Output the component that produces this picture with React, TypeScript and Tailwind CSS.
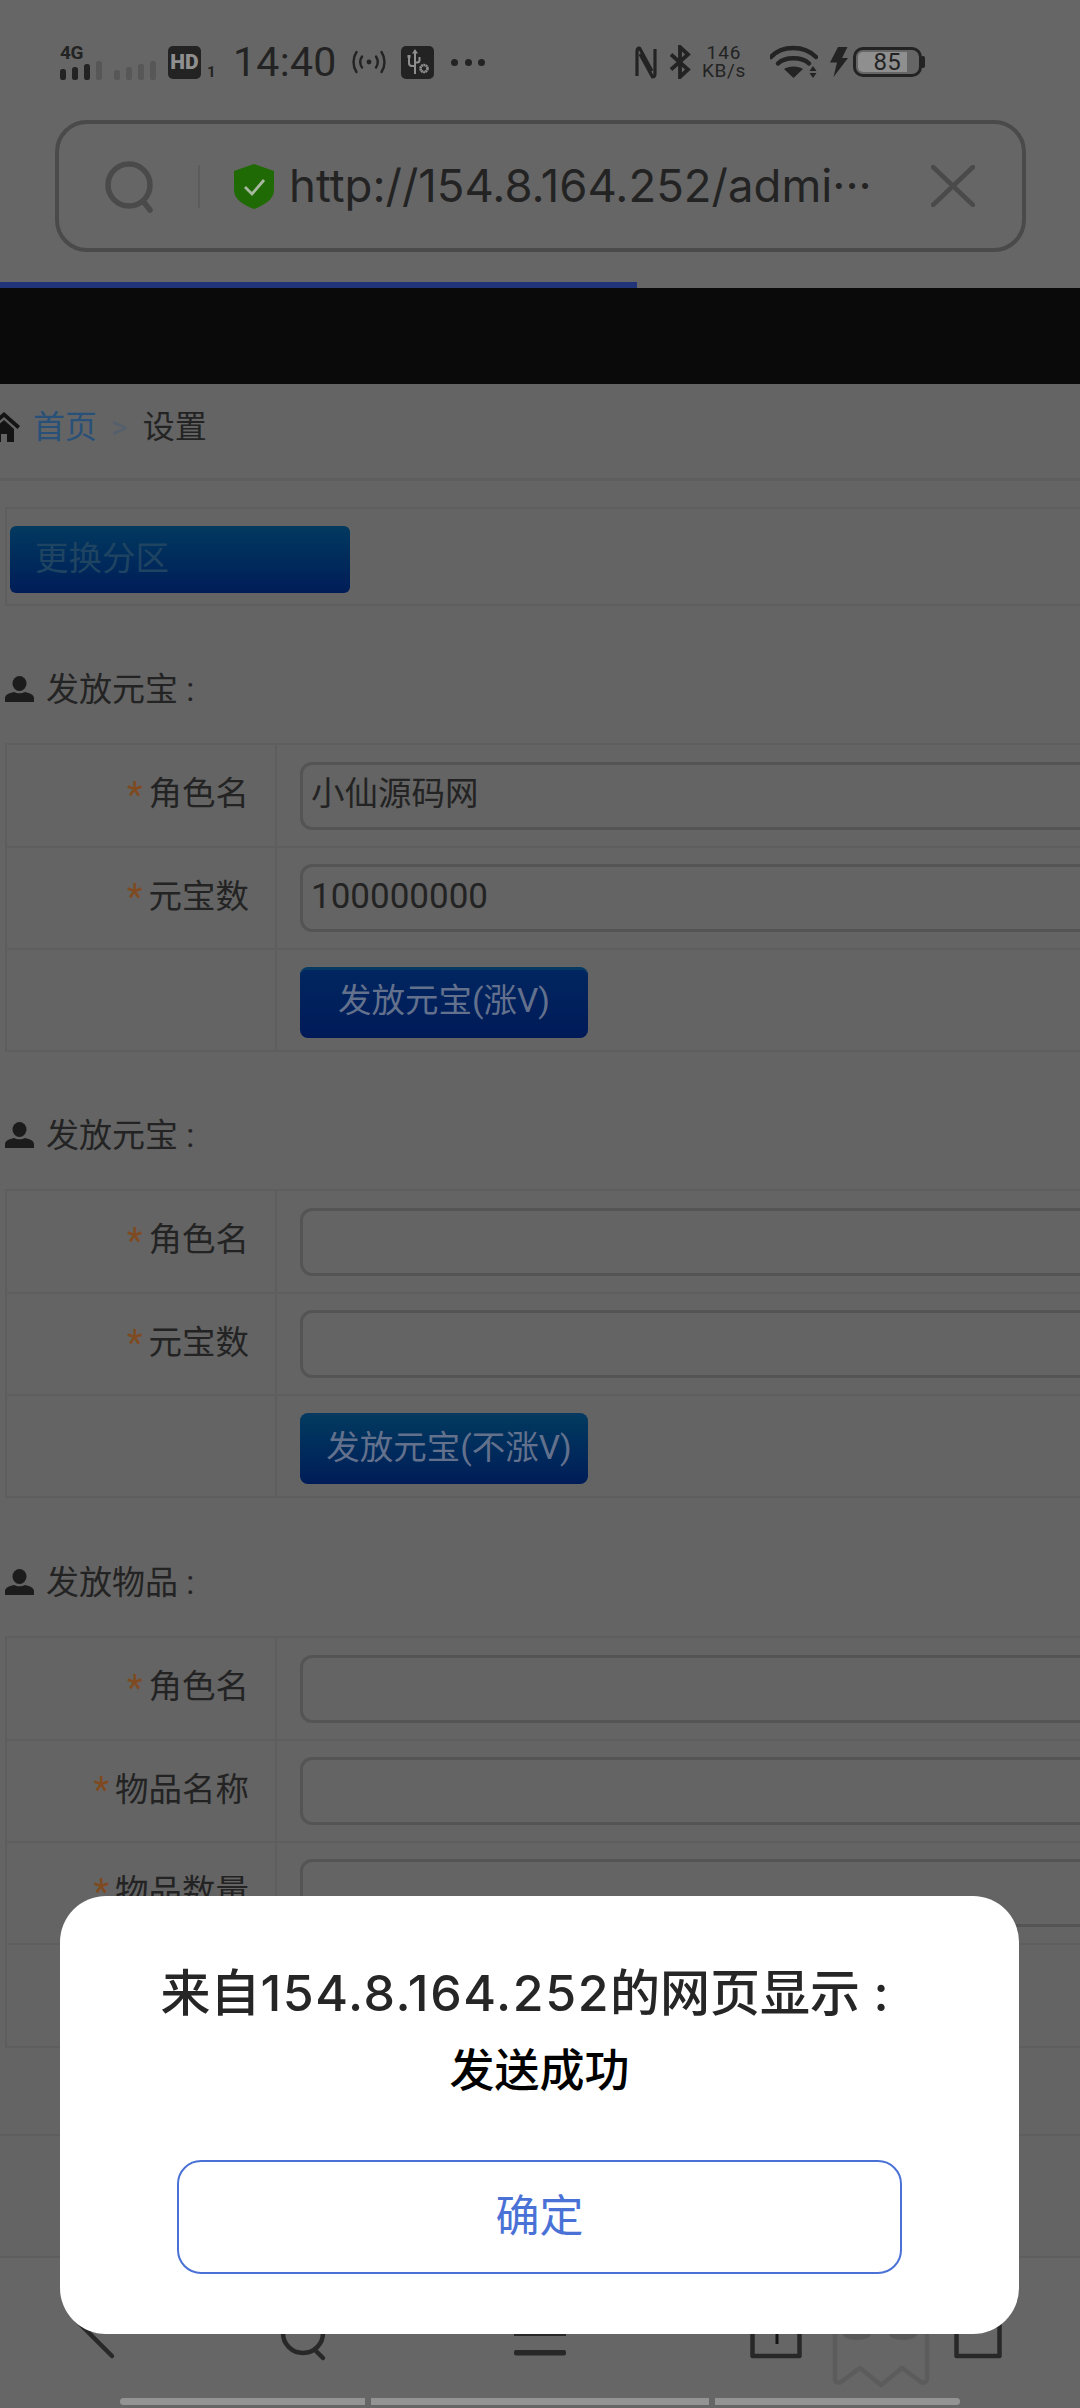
import React from "react";

const FONT = { fontFamily: '"Roboto","Noto Sans CJK SC",sans-serif' };
const INTER = { fontFamily: '"Inter","Noto Sans CJK SC",sans-serif' };

function SignalBars() {
  const dark = [[60, 11], [72, 13], [84, 16]];
  const light = [[96, 19], [114, 10], [126, 13], [138, 16], [150, 19]];
  return (
    <svg width="100" height="20" viewBox="60 0 100 20" className="block">
      {dark.map(([x, h]) => (
        <rect key={x} x={x} y={20 - h} width="6" height={h} rx="2.5" fill="#232323" />
      ))}
      {light.map(([x, h]) => (
        <rect key={x} x={x} y={20 - h} width="6" height={h} rx="2.5" fill="#575757" />
      ))}
    </svg>
  );
}

function StatusBar() {
  return (
    <div className="flex h-[40px] items-center pt-[4px] text-[#232323]">
      <div className="ml-[60px] flex w-[100px] flex-col">
        <span className="h-[15px] text-[19px] font-bold leading-[15px] tracking-[-0.5px]">4G</span>
        <SignalBars />
      </div>
      <span className="ml-[8px] flex h-[33px] w-[33px] items-center justify-center rounded-[5px] bg-[#232323] text-[21px] font-black leading-none text-[#8f8f8f]">HD</span>
      <span className="ml-[6px] mt-[20px] w-[6px] text-[15px] font-bold leading-none">1</span>
      <span className="ml-[20px] w-[106px] whitespace-nowrap text-[41px] leading-none tracking-[0.3px]">14:40</span>
      <svg width="34" height="24" viewBox="0 0 34 24" className="ml-[13px]" fill="none" stroke="#232323" strokeWidth="2.4" strokeLinecap="round">
        <circle cx="17" cy="12" r="2.4" fill="#232323" stroke="none" />
        <path d="M10 6.5c-2.2 3.400-2.200 7.600 0 11" />
        <path d="M24 6.500c2.200 3.400 2.200 7.600 0 11" />
        <path d="M4.500 2c-4 6-4 14 0 20" />
        <path d="M29.500 2c4 6 4 14 0 20" />
      </svg>
      <span className="ml-[15px] flex h-[33px] w-[33px] items-center justify-center rounded-[5px] bg-[#232323]">
        <svg width="27" height="29" viewBox="0 0 27 29" fill="none" stroke="#8f8f8f" strokeWidth="2">
          <path d="M11 26V4" />
          <path d="M11 1l3 4.500H8z" fill="#8f8f8f" stroke="none" />
          <path d="M5 10v5c0 2 1 3 3 3h3" />
          <path d="M15.500 9v3c0 1.500-1 2.500-2.500 2.500h-2" />
          <rect x="3.500" y="7" width="3" height="3" fill="#8f8f8f" stroke="none" />
          <circle cx="20" cy="20.500" r="3.500" strokeWidth="2.600" strokeDasharray="1.800 0.400" />
        </svg>
      </span>
      <span className="ml-[17px] flex w-[34px] justify-between">
        <i className="block h-[7px] w-[7px] rounded-full bg-[#232323]" />
        <i className="block h-[7px] w-[7px] rounded-full bg-[#232323]" />
        <i className="block h-[7px] w-[7px] rounded-full bg-[#232323]" />
      </span>

      <svg width="22" height="33" viewBox="0 0 22 33" className="ml-[150px]" fill="none" stroke="#232323" strokeWidth="3.200" strokeLinejoin="round">
        <path d="M2 30V5.500C2 3 3 2 4.500 2L17 25" />
        <path d="M20 3v24.500c0 2-1 3.500-2.500 3.500L5 8" />
      </svg>
      <svg width="22" height="34" viewBox="0 0 22 34" className="ml-[12px]" fill="none" stroke="#232323" strokeWidth="3.800" strokeLinejoin="miter">
        <path d="M2 9.500l17 15L11 32V2l8 7.500L2 24.500" />
      </svg>
      <div className="ml-[11px] flex w-[44px] flex-col items-center text-[19px] leading-[18px]">
        <span className="tracking-[1px]">146</span>
        <span className="whitespace-nowrap tracking-[0.6px]">KB/s</span>
      </div>
      <svg width="48" height="34" viewBox="0 0 48 34" className="ml-[24px]" fill="#232323">
        <path d="M1 12C12 0 34 0 46 12" fill="none" stroke="#232323" strokeWidth="4.500" strokeLinecap="round" />
        <path d="M8 18.500C15 11.500 32 11.500 39 18.500" fill="none" stroke="#232323" strokeWidth="4.500" strokeLinecap="round" />
        <path d="M14 24c4-3.500 15-3.500 19 0l-9.500 9z" />
        <path d="M43 21l3.500 5h-7zM39.500 28h7L43 33z" />
      </svg>
      <svg width="18" height="30" viewBox="0 0 18 30" className="ml-[12px]" fill="#232323">
        <path d="M8 0h9.500l-5.500 11h6L3.500 30 7 15.500H0z" />
      </svg>
      <div className="ml-[5px] flex items-center">
        <div className="flex h-[30px] w-[69px] items-center rounded-[10px] border-[3px] border-[#232323] p-[2px]">
          <div className="flex h-full w-[49px] items-center justify-end rounded-l-[5px] bg-[#8f8f8f] pr-[6px] text-[24px] leading-none tracking-[0.3px]">85</div>
        </div>
        <div className="h-[12px] w-[3px] rounded-r-[2px] bg-[#232323]" />
      </div>
    </div>
  );
}

function AddressBar() {
  return (
    <div className="mx-[55px] mt-[40px] flex h-[132px] w-[971px] items-center rounded-[32px] border-[4px] border-[#4a4a4a]">
      <svg width="52" height="52" viewBox="0 0 52 52" className="ml-[46px] mt-[2px]" fill="none" stroke="#4a4a4a" strokeWidth="5.500" strokeLinecap="round">
        <circle cx="24" cy="24" r="21" />
        <path d="M38 40l7 9" />
      </svg>
      <div className="ml-[41px] h-[43px] w-[2px] bg-[#5c5c5c]" />
      <svg width="40" height="45" viewBox="0 0 40 45" className="ml-[34px]">
        <path d="M20 0l20 7v19c0 9-9 15-20 19C9 41 0 35 0 26V7z" fill="#206a05" />
        <path d="M11 23l7 7 12-14" fill="none" stroke="#a8b8a0" strokeWidth="2.800" />
      </svg>
      <span className="ml-[15px] w-[583px] whitespace-nowrap text-[45.500px] leading-none text-[#232323]" style={INTER}>http://154.8.164.252/admi···</span>
      <svg width="44" height="42" viewBox="0 0 44 42" className="ml-[59px]" fill="none" stroke="#4a4a4a" strokeWidth="4.500" strokeLinecap="round">
        <path d="M2 2l40 38M42 2L2 40" />
      </svg>
    </div>
  );
}

function HomeIcon() {
  return (
    <svg width="32" height="30" viewBox="0 0 32 30" className="ml-[-12px]" fill="#141414">
      <path d="M16 0L32 14l-2.500 3L16 5 2.500 17 0 14z" />
      <path d="M6 17L16 8l10 9v13h-7v-8h-6v8H6z" />
    </svg>
  );
}

function UserIcon() {
  return (
    <svg width="29" height="26" viewBox="0 0 29 26" fill="#1c1c1c">
      <ellipse cx="14.500" cy="7.500" rx="7" ry="7.500" />
      <path d="M0 26v-4c0-3 4-5 9-6 3 1.800 8 1.800 11 0 5 1 9 3 9 6v4z" />
    </svg>
  );
}

function Heading({ title, tall }: { title: string; tall?: boolean }) {
  return (
    <div className={`ml-[5px] flex items-end gap-[12px] pb-[31px] text-[33px] leading-[44px] text-[#232323] ${tall ? "h-[138px]" : "h-[137px]"}`}>
      <span className="mb-[10px]">
        <UserIcon />
      </span>
      <span>{title} :</span>
    </div>
  );
}

function Row({ label, value, first }: { label?: string; value?: string; first?: boolean }) {
  return (
    <div className={`flex ${first ? "h-[101px]" : "h-[102px] border-t-2 border-[#5e5e5e]"}`}>
      <div className="flex w-[270px] items-center justify-end border-r-2 border-[#5e5e5e] pb-[2px] pr-[26px] text-[33.500px] text-[#232323]">
        {label && (
          <>
            <span className="mr-[6px] text-[36px] leading-none text-[#7f4a1f]">*</span>
            {label}
          </>
        )}
      </div>
      <div className="flex flex-1 items-center pl-[23px]">
        <div className={`flex h-[68px] w-[1000px] items-center rounded-[12px] border-[3px] border-[#545454] pb-[2px] pl-[8px] text-[#232323] ${value && value.startsWith("1") ? "text-[35px]" : "text-[33.500px]"}`}>
          {value}
        </div>
      </div>
    </div>
  );
}

function ButtonRow({ text, light }: { text: string; light?: boolean }) {
  return (
    <div className="flex h-[102px] border-t-2 border-[#5e5e5e]">
      <div className="w-[270px] border-r-2 border-[#5e5e5e]" />
      <div className="flex flex-1 items-center pl-[23px]">
        <div
          className={`mt-[4px] flex h-[71px] w-[288px] items-center justify-center whitespace-nowrap rounded-[8px] border-t-[3px] border-[#063a62] text-[33.500px] text-[#63718c] ${light ? "bg-gradient-to-b from-[#03395f] to-[#001c58] pb-[3px] pl-[10px]" : "bg-gradient-to-b from-[#012660] to-[#001a58] pb-[4px]"}`}
        >
          {text}
        </div>
      </div>
    </div>
  );
}

function Table({ children }: { children: React.ReactNode }) {
  return <div className="ml-[5px] w-[1300px] border-2 border-[#5e5e5e]">{children}</div>;
}

function BottomNav() {
  const stroke = "#282828";
  return (
    <div className="h-[152px] border-t-2 border-[#5e5e5e] pt-[42px]">
      <div className="flex h-[62px] items-end">
        <svg width="50" height="62" viewBox="0 0 50 62" className="ml-[72px] shrink-0" fill="none" stroke={stroke} strokeWidth="4.500" strokeLinecap="round">
          <path d="M40 56L4 20" />
        </svg>
        <svg width="56" height="62" viewBox="0 0 56 62" className="ml-[158px] shrink-0" fill="none" stroke={stroke} strokeWidth="4.500" strokeLinecap="round">
          <circle cx="23" cy="33" r="20" />
          <path d="M35 50l8 8" />
        </svg>
        <svg width="52" height="62" viewBox="0 0 52 62" className="ml-[178px] shrink-0" fill={stroke}>
          <rect x="0" y="30" width="52" height="6" />
          <rect x="0" y="50" width="52" height="5.500" rx="2" />
        </svg>
        <svg width="52" height="62" viewBox="0 0 52 62" className="ml-[184px] shrink-0" fill="none" stroke={stroke} strokeWidth="4.500">
          <path d="M2.500 10v46h47V10" strokeLinejoin="round" />
          <path d="M27 30v14" strokeWidth="3" stroke="#141414" />
        </svg>
        <svg width="98" height="88" viewBox="0 0 98 88" className="ml-[30px] mb-[-26px] shrink-0" fill="none" stroke="#5c5c5c" strokeWidth="4.500" strokeLinejoin="round">
          <path d="M3 2v76q0 6 6 4L28 68 49 85 70 68 89 82q6 2 6-4V2" />
          <ellipse cx="25" cy="34" rx="14" ry="6" fill="#595959" stroke="none" />
          <ellipse cx="71" cy="34" rx="14" ry="6" fill="#595959" stroke="none" />
        </svg>
        <svg width="48" height="62" viewBox="0 0 48 62" className="ml-[24px] shrink-0" fill="none" stroke={stroke} strokeWidth="4.500">
          <path d="M2.500 10v46h43V10" strokeLinejoin="round" />
        </svg>
      </div>
      <div className="ml-[120px] mt-[36px] flex w-[840px] gap-[6px]">
        <div className="h-[7px] w-[245px] rounded-l-[4px] bg-[#949494]" />
        <div className="h-[7px] w-[338px] bg-[#949494]" />
        <div className="h-[7px] w-[245px] rounded-r-[4px] bg-[#949494]" />
      </div>
    </div>
  );
}

function Dialog() {
  return (
    <div className="absolute left-[60px] top-[1896px] flex h-[438px] w-[959px] flex-col items-center rounded-[46px] bg-white">
      <div className="mr-[30px] mt-[67px] whitespace-nowrap text-[50px] font-medium leading-[60px] text-[#262626]" style={INTER}>
        来自<span className="tracking-[1.6px]">154.8.164.252</span>的网页显示 :
      </div>
      <div className="mt-[21px] text-[45px] font-medium leading-[56px] text-black">发送成功</div>
      <div className="mt-[60px] flex h-[114px] w-[725px] items-center justify-center rounded-[24px] border-2 border-[#4a72d6] text-[44px] text-[#4a72d6]">确定</div>
    </div>
  );
}

export default function App() {
  return (
    <div className="relative h-[2408px] w-[1080px] overflow-hidden bg-[#666666]" style={FONT}>
      <div className="pt-[40px]">
        <StatusBar />
        <AddressBar />
        <div className="mt-[30px] h-[6px] w-[637px] bg-[#21347a]" />
      </div>
      <div className="h-[96px] bg-[#0a0a0a]" />

      <div className="flex h-[97px] items-center border-b-[3px] border-[#5e5e5e] bg-[#646464] pb-[8px] text-[32px]">
        <HomeIcon />
        <span className="ml-[13px] text-[#285078]">首页</span>
        <span className="ml-[14px] text-[#535f6b]">&gt;</span>
        <span className="ml-[15px] text-[#232323]">设置</span>
      </div>

      <div className="bg-[#646464]">
        <div className="pt-[26px]">
          <div className="ml-[5px] h-[99px] w-[1300px] border-2 border-[#5e5e5e] pl-[3px] pt-[17px]">
            <div className="flex h-[67px] w-[340px] items-center rounded-[6px] bg-gradient-to-b from-[#03395f] to-[#001c58] pl-[25px] text-[33.500px] text-[#1f4462]">更换分区</div>
          </div>
        </div>

        <Heading title="发放元宝" />
        <Table>
          <Row first label="角色名" value="小仙源码网" />
          <Row label="元宝数" value="100000000" />
          <ButtonRow text="发放元宝(涨V)" />
        </Table>

        <Heading title="发放元宝" />
        <Table>
          <Row first label="角色名" />
          <Row label="元宝数" />
          <ButtonRow text="发放元宝(不涨V)" light />
        </Table>

        <Heading title="发放物品" tall />
        <Table>
          <Row first label="角色名" />
          <Row label="物品名称" />
          <Row label="物品数量" />
          <div className="h-[103px] border-t-2 border-[#5e5e5e]" />
        </Table>

        <div className="h-[88px] border-b-2 border-[#5e5e5e]" />
        <div className="h-[120px]" />
      </div>

      <BottomNav />
      <Dialog />
    </div>
  );
}
